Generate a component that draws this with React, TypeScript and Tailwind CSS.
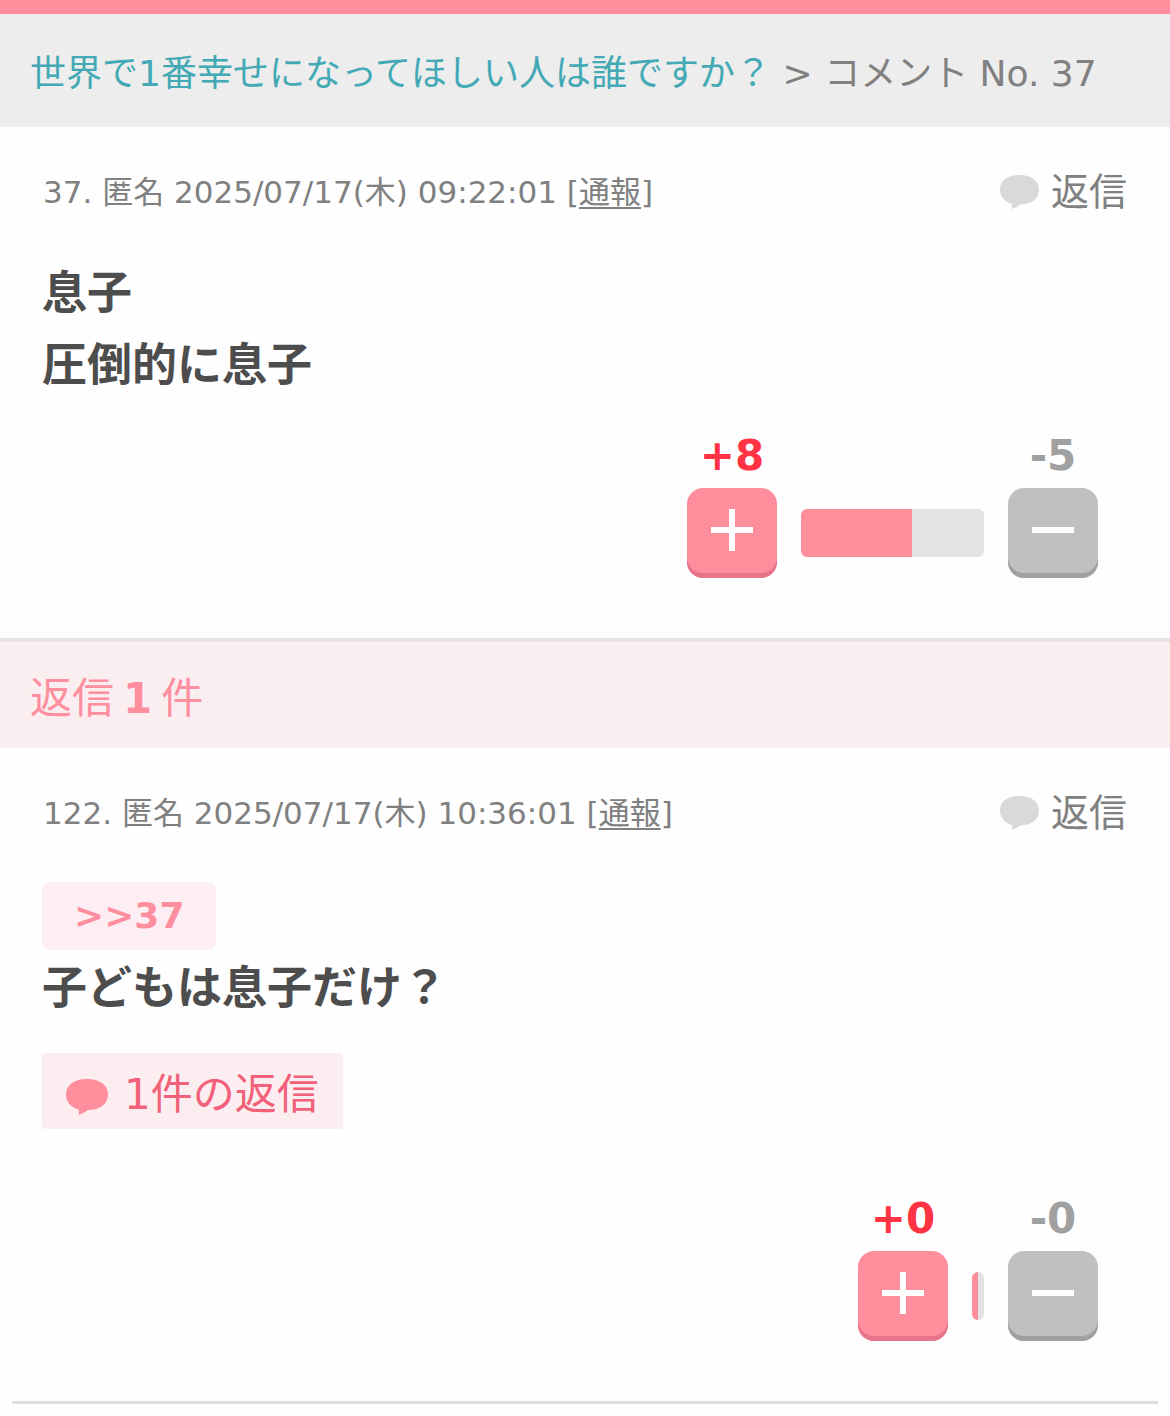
interface Comment {
  id: number;
  name: string;
  date: string;
  anchor?: string;
  lines: string[];
  replies?: number;
  plus: number;
  minus: number;
}

const COMMENT: Comment = {
  id: 37,
  name: '匿名',
  date: '2025/07/17(木) 09:22:01',
  lines: ['息子', '圧倒的に息子'],
  plus: 8,
  minus: 5,
};

const REPLIES: Comment[] = [
  {
    id: 122,
    name: '匿名',
    date: '2025/07/17(木) 10:36:01',
    anchor: '>>37',
    lines: ['子どもは息子だけ？'],
    replies: 1,
    plus: 0,
    minus: 0,
  },
];

// each side of the vote bar keeps a stub even without votes
const BAR_STUB = 6;
const BAR_SPAN = 171;

function BubbleIcon({ className }: { className: string }) {
  return (
    <svg viewBox="0 0 42 36" preserveAspectRatio="none" fill="currentColor" aria-hidden="true" className={className}>
      <path d="M21 0C8 0 0 6 0 15.5 0 23 5 28 12.5 30.500c.8 2 .6 3.800-.2 5.500 4-1.200 7-2.800 9.700-5C34 31 42 25 42 15.500 42 6 34 0 21 0Z" />
    </svg>
  );
}

function VoteBar({ plus, minus }: { plus: number; minus: number }) {
  const total = plus + minus;
  const plusWidth = BAR_STUB + (total ? (plus / total) * BAR_SPAN : 0);
  const minusWidth = BAR_STUB + (total ? (minus / total) * BAR_SPAN : 0);

  return (
    <div className="flex h-12 rounded-md overflow-hidden">
      <div className="bg-[#ff8e9c]" style={{ width: plusWidth }} />
      <div className="bg-[#e3e3e3]" style={{ width: minusWidth }} />
    </div>
  );
}

function VotePanel({ plus, minus }: { plus: number; minus: number }) {
  return (
    <div className="flex justify-end items-end gap-6 pr-[30px]">
      <div className="w-[90px]">
        <p className="mb-2 text-center text-[42px] leading-[48px] font-bold text-[#ff3344]">+{plus}</p>
        <button
          aria-label="プラス"
          className="flex justify-center w-full h-[90px] pt-[21px] rounded-2xl bg-[#ff8e9c] shadow-[inset_0_-5px_0_#e8748a]"
        >
          <svg viewBox="0 0 42 42" className="w-[42px] h-[42px]" stroke="white" strokeWidth="6">
            <path d="M0 21h42M21 0v42" />
          </svg>
        </button>
      </div>
      <div className="pb-[21px]">
        <VoteBar plus={plus} minus={minus} />
      </div>
      <div className="w-[90px]">
        <p className="mb-2 text-center text-[42px] leading-[48px] font-bold text-[#a0a0a0]">-{minus}</p>
        <button
          aria-label="マイナス"
          className="flex justify-center w-full h-[90px] pt-[21px] rounded-2xl bg-[#c0c0c0] shadow-[inset_0_-5px_0_#a0a0a0]"
        >
          <svg viewBox="0 0 42 42" className="w-[42px] h-[42px]" stroke="white" strokeWidth="6">
            <path d="M0 21h42" />
          </svg>
        </button>
      </div>
    </div>
  );
}

function CommentItem({ comment }: { comment: Comment }) {
  return (
    <article className="px-[42px] pt-[41px] pb-[60px]">
      <div className="flex items-center justify-between h-12 mb-[42px] px-px text-[#808080]">
        <p className="text-[31px] leading-[48px]">
          {comment.id}. {comment.name} {comment.date} [
          <a href="#report" className="underline underline-offset-4 decoration-2">通報</a>]
        </p>
        <a href="#reply" className="flex items-center gap-3 text-[38px] leading-[48px]">
          <BubbleIcon className="w-[39px] h-[34px] text-[#d9d9d9]" />
          返信
        </a>
      </div>
      <div className="text-[45px] leading-[72px] font-bold text-[#4d4d4d]">
        {comment.anchor && (
          <div className="flex items-center h-[74px]">
            <a href="#comment-37" className="px-8 rounded-lg bg-[#fceef2] text-[36px] leading-[68px] text-[#ff8e9f]">
              {comment.anchor}
            </a>
          </div>
        )}
        {comment.lines.map((line) => (
          <p key={line}>{line}</p>
        ))}
      </div>
      {comment.replies && (
        <a
          href="#replies"
          className="flex items-center gap-4 w-fit h-[76px] mt-7 mb-6 px-6 pt-2 rounded-sm bg-[#fceef0] text-[42px] leading-[68px] text-[#f2607a]"
        >
          <BubbleIcon className="w-[42px] h-9 mt-1 text-[#ff8e9c]" />
          {comment.replies}件の返信
        </a>
      )}
      <div className={comment.replies ? 'pt-[42px]' : 'pt-[30px]'}>
        <VotePanel plus={comment.plus} minus={comment.minus} />
      </div>
    </article>
  );
}

export default function App() {
  return (
    <main className="min-h-screen border-t-[14px] border-[#ff8e9c] bg-[#fefefe] font-['DejaVu_Sans','Noto_Sans_CJK_JP',sans-serif]">
      <nav className="px-[30px] pt-[35px] pb-[29px] bg-[#ededed] text-[36px] leading-[49px] text-[#808080]">
        <a href="#topic" className="text-[#43a9b5]">世界で1番幸せになってほしい人は誰ですか？</a> &gt; コメント No. 37
      </nav>
      <CommentItem comment={COMMENT} />
      <h2 className="flex gap-[9px] px-[30px] pt-8 pb-6 border-t-4 border-[#e9e1e4] bg-[#fbeef1] text-[42px] leading-[50px] text-[#ff8e9f]">
        <span>返信</span>
        <strong>{REPLIES.length}</strong>
        <span>件</span>
      </h2>
      {REPLIES.map((reply) => (
        <CommentItem key={reply.id} comment={reply} />
      ))}
      <hr className="mx-3 border-t-3 border-[#dedede]" />
    </main>
  );
}
